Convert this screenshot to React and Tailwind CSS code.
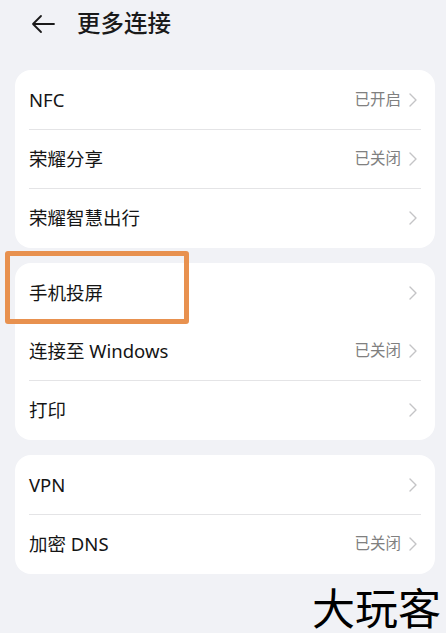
import React from "react";

const font = { fontFamily: '"Noto Sans", "Noto Sans CJK SC", sans-serif' };

function Chevron() {
  return (
    <svg width="8" height="14" viewBox="0 0 8 14" className="ml-[8px] shrink-0">
      <path d="M1 1 L7 7 L1 13" fill="none" stroke="#c4c4c6" strokeWidth="1.4" strokeLinecap="round" strokeLinejoin="round" />
    </svg>
  );
}

function Row({ label, value, divider, highlight }) {
  return (
    <div className="relative">
      <div className="flex h-[58px] items-center pl-[14px] pr-[18px]">
        <span className="flex-1 text-[18.5px] text-[#151515]">{label}</span>
        {value && <span className="text-[15.5px] text-[#808080]">{value}</span>}
        <Chevron />
      </div>
      {divider && <div className="mx-[14px] h-px bg-[#e4e4e6]" />}
      {highlight && (
        <div className="absolute left-[-10px] top-[-13px] h-[73px] w-[184px] rounded-[3px] border-[5px] border-[#e8914f]" />
      )}
    </div>
  );
}

function Card({ children, className = "" }) {
  return <div className={"ml-[15px] mr-[11px] rounded-[16px] bg-white py-[1px] " + className}>{children}</div>;
}

export default function App() {
  return (
    <div className="h-[633px] w-[446px] overflow-hidden bg-[#f1f2f6]" style={font}>
      <div className="flex h-[46px] items-center pl-[31px] pt-[1px]">
        <svg width="25" height="20" viewBox="0 0 25 20">
          <path d="M23 10 H2 M10 2 L2 10 L10 18" fill="none" stroke="#1a1a1a" strokeWidth="1.8" strokeLinecap="round" strokeLinejoin="round" />
        </svg>
        <span className="ml-[21px] text-[23.5px] font-medium text-[#1a1a1a]">更多连接</span>
      </div>
      <div className="h-[24px]" />
      <Card>
        <Row label="NFC" value="已开启" divider />
        <Row label="荣耀分享" value="已关闭" divider />
        <Row label="荣耀智慧出行" />
      </Card>
      <Card className="mt-[15px]">
        <Row label="手机投屏" highlight />
        <Row label="连接至 Windows" value="已关闭" divider />
        <Row label="打印" />
      </Card>
      <Card className="mt-[15px]">
        <Row label="VPN" divider />
        <Row label="加密 DNS" value="已关闭" />
      </Card>
      <div className="mr-[5px] mt-[11px] flex justify-end">
        <span className="text-[43px] leading-[43px] font-normal text-black" style={{ fontFamily: '"Noto Sans CJK SC", sans-serif' }}>大玩客</span>
      </div>
    </div>
  );
}
